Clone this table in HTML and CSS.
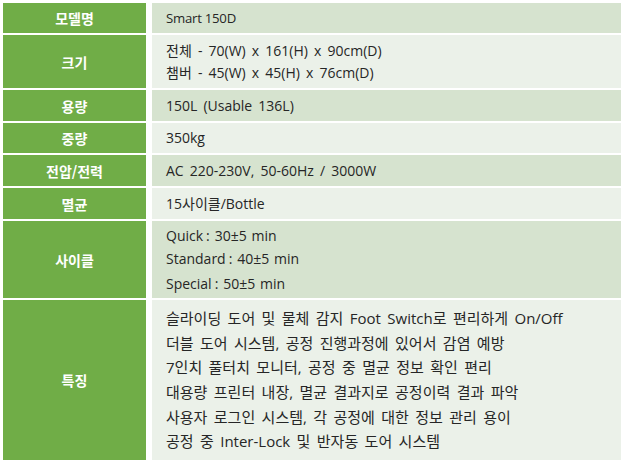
FILE: index.html
```html
<!DOCTYPE html>
<html lang="ko">
<head>
<meta charset="utf-8">
<link rel="stylesheet" href="styles.css">
</head>
<body>
<div class="spec">
  <div class="head">모델명</div>
  <div class="cell dark model"><div>Smart 150D</div></div>

  <div class="head">크기</div>
  <div class="cell light lh22"><div>전체 - 70(W) x 161(H) x 90cm(D)</div><div>챔버 - 45(W) x 45(H) x 76cm(D)</div></div>

  <div class="head">용량</div>
  <div class="cell dark"><div>150L (Usable 136L)</div></div>

  <div class="head">중량</div>
  <div class="cell light"><div>350kg</div></div>

  <div class="head">전압/전력</div>
  <div class="cell dark"><div>AC 220-230V, 50-60Hz / 3000W</div></div>

  <div class="head">멸균</div>
  <div class="cell light"><div>15사이클/Bottle</div></div>

  <div class="head">사이클</div>
  <div class="cell dark cycle"><div>Quick<span class="colon">:</span>30±5 min</div><div>Standard<span class="colon">:</span>40±5 min</div><div class="last">Special<span class="colon">:</span>50±5 min</div></div>

  <div class="head">특징</div>
  <div class="cell light features">
    <div>슬라이딩 도어 및 물체 감지 Foot Switch로 편리하게 On/Off</div>
    <div>더블 도어 시스템, 공정 진행과정에 있어서 감염 예방</div>
    <div>7인치 풀터치 모니터, 공정 중 멸균 정보 확인 편리</div>
    <div>대용량 프린터 내장, 멸균 결과지로 공정이력 결과 파악</div>
    <div>사용자 로그인 시스템, 각 공정에 대한 정보 관리 용이</div>
    <div>공정 중 Inter-Lock 및 반자동 도어 시스템</div>
  </div>
</div>
</body>
</html>
```

FILE: styles.css
```css
html, body {
  margin: 0;
  padding: 0;
  background: #ffffff;
}
body {
  font-family: "Open Sans", "Noto Sans CJK KR", sans-serif;
  font-size: 14px;
  color: #262626;
}
.spec {
  display: grid;
  grid-template-columns: 143px 469px;
  grid-template-rows: 30px 53px 31px 30px 31px 31px 77px 160px;
  column-gap: 6px;
  row-gap: 2px;
  margin: 3px 0 0 3px;
}
.head {
  background: #70ad47;
  color: #ffffff;
  font-family: "Noto Sans CJK KR", sans-serif;
  font-weight: bold;
  font-size: 14px;
  display: flex;
  align-items: center;
  justify-content: center;
}
.cell {
  display: flex;
  flex-direction: column;
  justify-content: center;
  padding-left: 14px;
  line-height: 20px;
  word-spacing: 2.5px;
}
.model {
  font-size: 13.2px;
  letter-spacing: -0.25px;
  word-spacing: 0;
}
.dark { background: #d6e3cf; }
.light { background: #ebf1e9; }
.lh22 { line-height: 22px; }
.cycle {
  line-height: 23px;
  word-spacing: 1px;
}
.cycle .last { margin-top: 2px; }
.colon { margin: 0 5px 0 3px; }
.features {
  font-size: 15px;
  line-height: 24.6px;
  word-spacing: 2.5px;
}
```
